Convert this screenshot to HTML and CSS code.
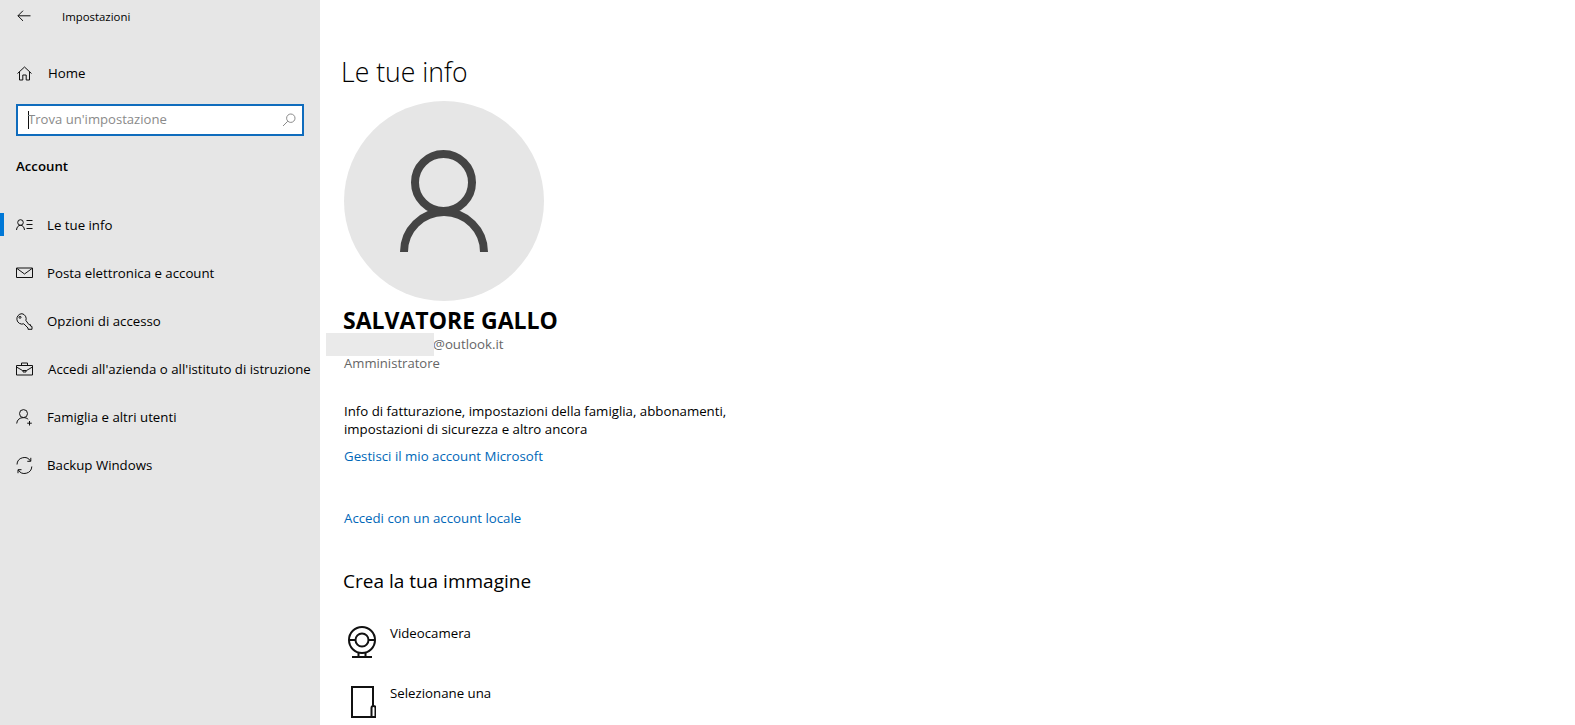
FILE: index.html
```html
<!DOCTYPE html>
<html lang="it">
<head>
    <meta charset="UTF-8">
    <title>Impostazioni</title>
    <link rel="stylesheet" href="styles.css">
</head>
<body>
    <div class="sidebar">
        <div class="titlebar">
            <svg class="back-icon" width="14" height="12" viewBox="0 0 14 12"><path d="M6 .7 .9 5.800 6 10.900M.9 5.800H13.500"/></svg>
            <span class="app-title">Impostazioni</span>
        </div>
        <div class="home">
            <svg class="nav-icon" width="15" height="15" viewBox="0 0 15 15"><path d="M.5 7.500 7.500 1 14.500 7.500M2.500 5.800V14H5.800V9H9.200V14H12.500V5.800"/></svg>
            <span>Home</span>
        </div>
        <div class="search">
            <span class="caret"></span>
            <span class="search-text">Trova un'impostazione</span>
            <svg class="search-icon" width="14" height="14" viewBox="0 0 14 14"><circle cx="8.800" cy="5.200" r="4.200"/><path d="M5.800 8.200 1 13"/></svg>
        </div>
        <div class="group-title">Account</div>
        <div class="nav">
            <div class="nav-item active">
                <svg class="nav-icon" width="17" height="12" viewBox="0 0 17 12"><circle cx="4.500" cy="3.500" r="2.800"/><path d="M.5 11C.8 8 2.300 6.300 4.500 6.300S8.200 8 8.500 11M10.500 1.500H16.500M10.500 5.500H16.500M10.500 9.500H16.500"/></svg>
                <span>Le tue info</span>
            </div>
            <div class="nav-item">
                <svg class="nav-icon" width="17" height="12" viewBox="0 0 17 12"><path d="M.5 1H16.500V10.500H.5ZM1 1.500 8.500 7 16 1.500"/></svg>
                <span>Posta elettronica e account</span>
            </div>
            <div class="nav-item">
                <svg class="nav-icon" width="17" height="17" viewBox="0 0 17 17"><path d="M6 .7A5.200 5.200 0 1 0 7.800 10.800L12 15V16.300H16V13.500L14.500 13V11.700H13L9.900 7.500A5.200 5.200 0 0 0 6 .7Z"/><circle cx="4" cy="4.300" r="1"/></svg>
                <span>Opzioni di accesso</span>
            </div>
            <div class="nav-item work">
                <svg class="nav-icon" width="17" height="14" viewBox="0 0 17 14"><path d="M.5 3.500H16.500V13H.5ZM5.500 3.500V1H11.500V3.500M.5 5 6.500 8.500H10.500L16.500 5M7 8.500V10H10V8.500"/></svg>
                <span>Accedi all'azienda o all'istituto di istruzione</span>
            </div>
            <div class="nav-item">
                <svg class="nav-icon" width="17" height="17" viewBox="0 0 17 17"><circle cx="7.500" cy="4.600" r="4"/><path d="M.7 14.500C1 10.800 3.600 8.600 7.500 8.600C9.400 8.600 11 9.200 12.200 10.300M13.500 12V16.500M11.200 14.200H15.800"/></svg>
                <span>Famiglia e altri utenti</span>
            </div>
            <div class="nav-item">
                <svg class="nav-icon" width="17" height="17" viewBox="0 0 17 17"><path d="M1 7.500A7.300 7.300 0 0 1 14.500 4M15.800 9.500A7.300 7.300 0 0 1 2.300 13M14.800 .8V4.300H11.300M2 16.200V12.700H5.500"/></svg>
                <span>Backup Windows</span>
            </div>
        </div>
    </div>

    <div class="main">
        <h1 class="page-title">Le tue info</h1>
        <div class="avatar">
            <svg width="88" height="102" viewBox="0 0 88 102"><circle cx="43.500" cy="32.500" r="28.500"/><path d="M4 102A40 40 0 0 1 84 102"/></svg>
        </div>
        <div class="user-name">SALVATORE GALLO</div>
        <div class="user-mail">
            <span class="mail-hidden"></span>
            <span>@outlook.it</span>
        </div>
        <div class="user-role">Amministratore</div>
        <p class="billing">Info di fatturazione, impostazioni della famiglia, abbonamenti,<br>impostazioni di sicurezza e altro ancora</p>
        <a class="link manage-link">Gestisci il mio account Microsoft</a>
        <a class="link local-link">Accedi con un account locale</a>
        <h2 class="sub-title">Crea la tua immagine</h2>
        <div class="pic-options">
            <div class="pic-option">
                <svg class="pic-icon" width="28" height="32" viewBox="0 0 28 32"><circle cx="14" cy="14" r="13"/><circle cx="14" cy="14" r="6.500"/><path d="M1 14H7.500M20.500 14H27M10.500 27V31M17.500 27V31M4 31H24"/></svg>
                <span>Videocamera</span>
            </div>
            <div class="pic-option">
                <svg class="pic-icon" width="28" height="32" viewBox="0 0 28 32"><path d="M25 20V1H4V31H24M23.500 31V22A2 2 0 0 1 27.500 22V31Z"/></svg>
                <span>Selezionane una</span>
            </div>
        </div>
    </div>
</body>
</html>
```

FILE: styles.css
```css
* {
    margin: 0;
    padding: 0;
    box-sizing: border-box;
}

html, body {
    height: 100%;
    overflow: hidden;
}

body {
    display: flex;
    background: #fff;
    color: #000;
    font-family: "Open Sans", "Noto Sans", sans-serif;
    font-size: 13.25px;
}

svg {
    fill: none;
    stroke: #111;
    stroke-width: 1;
    flex-shrink: 0;
}

/* --- Sidebar --- */
.sidebar {
    width: 320px;
    flex-shrink: 0;
    background: #e6e6e6;
}

.titlebar {
    display: flex;
    align-items: center;
    height: 32px;
    padding-left: 17px;
}

.app-title {
    margin-left: 31px;
    font-size: 11.4px;
}

.home {
    display: flex;
    align-items: center;
    gap: 16px;
    height: 24px;
    margin-top: 29px;
    padding-left: 17px;
}

.search {
    display: flex;
    align-items: center;
    width: 288px;
    height: 32px;
    margin: 19px 0 0 16px;
    padding: 0 6px 0 10px;
    background: #fff;
    border: 2px solid #0f6cbd;
}

.caret {
    width: 1px;
    height: 18px;
    background: #111;
}

.search-text {
    flex: 1;
    margin-left: -1px;
    padding-bottom: 2px;
    color: #8a8a8a;
    font-size: 13.1px;
}

.search-icon {
    stroke: #8a8a8a;
}

.group-title {
    margin: 20px 0 0 16px;
    font-weight: 600;
    line-height: 20px;
}

.nav {
    margin-top: 25px;
}

.nav-item {
    position: relative;
    display: flex;
    align-items: center;
    height: 48px;
    padding-left: 16px;
}

.nav-item .nav-icon {
    margin-right: 14px;
}

.nav-item.work .nav-icon {
    margin-right: 15px;
}

.nav-item.active::before {
    content: "";
    position: absolute;
    left: 0;
    top: 12px;
    width: 4px;
    height: 23px;
    background: #0078d7;
}

/* --- Main content --- */
.main {
    flex: 1;
    padding: 52px 0 0 22px;
    overflow: hidden;
}

.page-title {
    margin-left: -1px;
    font-size: 26.6px;
    font-weight: 300;
    line-height: 40px;
}

.avatar {
    display: flex;
    align-items: center;
    justify-content: center;
    width: 200px;
    height: 200px;
    margin: 9px 0 0 2px;
    background: #e6e6e6;
    border-radius: 50%;
}

.avatar svg {
    stroke: #444;
    stroke-width: 8;
}

.user-name {
    margin: 4px 0 0 1px;
    font-size: 23px;
    font-weight: 700;
    line-height: 30px;
}

.user-mail {
    position: relative;
    margin-left: 91px;
    color: #666;
    line-height: 18px;
}

.mail-hidden {
    position: absolute;
    left: -107px;
    top: -2px;
    width: 108px;
    height: 23px;
    background: #eaeaea;
}

.user-role {
    margin: 1px 0 0 2px;
    color: #666;
    font-size: 13.1px;
    line-height: 18px;
}

.billing {
    margin: 30px 0 0 2px;
    line-height: 18px;
}

.link {
    display: block;
    margin-left: 2px;
    color: #0067b8;
    line-height: 20px;
}

.manage-link {
    margin-top: 8px;
}

.local-link {
    margin-top: 42px;
}

.sub-title {
    margin: 39px 0 0 1px;
    font-size: 19px;
    font-weight: 400;
    line-height: 28px;
}

.pic-options {
    margin: 29px 0 0 6px;
}

.pic-option {
    display: flex;
    align-items: flex-start;
    gap: 14px;
    height: 60px;
}

.pic-icon {
    margin-top: 2px;
    stroke-width: 2;
}
```
